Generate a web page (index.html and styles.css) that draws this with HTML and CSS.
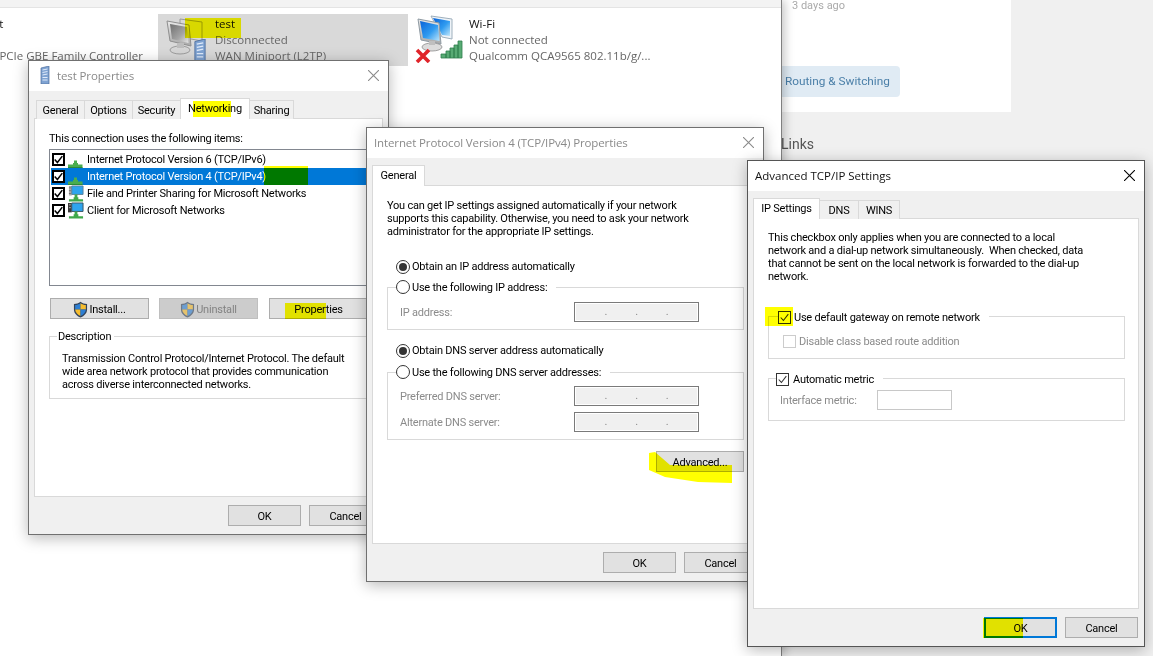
FILE: index.html
```html
<!DOCTYPE html>
<html lang="en">
<head>
<meta charset="utf-8">
<title>Advanced TCP/IP Settings</title>
<link rel="stylesheet" href="styles.css">
</head>
<body>
<svg class="defs" width="0" height="0" aria-hidden="true">
  <defs>
    <linearGradient id="blueScreen" x1="0" y1="0" x2="1" y2="1"><stop offset="0" stop-color="#0a63d8"/><stop offset=".55" stop-color="#2f9bf0"/><stop offset="1" stop-color="#bfe6fb"/></linearGradient>
    <linearGradient id="greyScreen" x1="0" y1="0" x2="1" y2="1"><stop offset="0" stop-color="#6f6f6f"/><stop offset=".6" stop-color="#a5a5a5"/><stop offset="1" stop-color="#e6e6e6"/></linearGradient>
    <linearGradient id="frame" x1="0" y1="0" x2="0" y2="1"><stop offset="0" stop-color="#e8e8e8"/><stop offset="1" stop-color="#a9a9a9"/></linearGradient>
    <symbol id="check" viewBox="0 0 13 13"><path d="M2 6.500 5.200 10 11 2.500" fill="none" stroke="currentColor" stroke-width="1.800"/></symbol>
    <symbol id="thincheck" viewBox="0 0 13 13"><path d="M2 6.500 5.200 10 11 2.500" fill="none" stroke="currentColor" stroke-width="1.200"/></symbol>
    <symbol id="close" viewBox="0 0 10 10"><path d="M0 0 10 10M10 0 0 10" fill="none" stroke="currentColor" stroke-width="1"/></symbol>
    <symbol id="arrow" viewBox="0 0 16 16"><path d="M6 8.500h3v2.500h1v1.500h4.500V16H0v-3.500h5V11h1z" fill="#4aad4f"/><path d="M0 15h14.500v1H0z" fill="#2c8a38"/></symbol>
    <symbol id="share" viewBox="0 0 17 18"><path d="M1 1h3v2h2v6H4v2H1z" fill="#a9a9a9"/><path d="M1 3h2M1 6h2M1 9h2" stroke="#6f6f6f"/><path d="M4 1h12v9H4z" fill="#2ea4ee" stroke="#5b7f99"/><path d="M1 15h5v-2h5v2h5v2.500H1z" fill="#3fa84a"/><path d="M7 10h3v4H7z" fill="#3fa84a"/></symbol>
    <symbol id="client" viewBox="0 0 17 18"><path d="M0 1h4v10H0z" fill="#3a3a3a"/><path d="M1 3h2M1 6h2" stroke="#bdbdbd"/><path d="M4 1h12v9H4z" fill="#2ea4ee" stroke="#39505f"/><path d="M1 15h5v-2h5v2h5v2.500H1z" fill="#3fa84a"/><path d="M7 10h3v4H7z" fill="#3fa84a"/></symbol>
    <symbol id="shield" viewBox="0 0 16 18"><path d="M8 .7C6 2.300 3.500 3 1 3v6c0 4 3 7 7 8.500 4-1.500 7-4.500 7-8.500V3C12.500 3 10 2.300 8 .7z" fill="#33435a"/><path d="M8 2.200C6.300 3.400 4.400 4 2.300 4.200V9H8z" fill="#2d7fd3"/><path d="M8 2.200C9.700 3.400 11.600 4 13.700 4.200V9H8z" fill="#f6bd2f"/><path d="M2.300 9H8v7C5 14.800 2.600 12.400 2.300 9z" fill="#f6bd2f"/><path d="M13.700 9H8v7c3-1.200 5.400-3.600 5.700-7z" fill="#2d7fd3"/></symbol>
    <symbol id="server" viewBox="0 0 10 18"><path d="M1 2 9 0v18H1z" fill="#7fa3d2"/><path d="M2.500 4 7.500 3M2.500 6.500 7.500 5.500M2.500 9 7.500 8M2.500 11.500h5M2.500 14h5" stroke="#dfeafa"/><path d="M1 2 9 0v18H1z" fill="none" stroke="#4d6f9f" stroke-width=".7"/></symbol>
  </defs>
</svg>

<div class="page">
  <main class="netwin">
    <div class="tiles">
      <div class="tile tile-eth">
        <div class="tile-text clip-left">
          <div class="tile-name">Ethernet</div>
          <div class="tile-status">&nbsp;</div>
          <div class="tile-status">Realtek PCIe GBE Family Controller</div>
        </div>
      </div>
      <div class="tile tile-test">
        <svg class="tile-icon" viewBox="0 0 48 48" width="48" height="48">
          <path d="M18 4 40 7v19l-22-4z" fill="#d8d8d8" stroke="#9a9a9a"/>
          <path d="M5 6 27 10l2 21L8 26z" fill="url(#frame)" stroke="#8f8f8f"/>
          <path d="M8 9 25 12l1.500 16L10 24z" fill="url(#greyScreen)"/>
          <ellipse cx="18" cy="35" rx="10" ry="4" fill="#d6d6d6" stroke="#9c9c9c"/>
          <path d="M15 28h7v5h-7z" fill="#bdbdbd"/>
          <use href="#server" x="31" y="24" width="14" height="23"/>
        </svg>
        <div class="tile-text">
          <div class="tile-name">test</div>
          <div class="tile-status">Disconnected</div>
          <div class="tile-status">WAN Miniport (L2TP)</div>
        </div>
      </div>
      <div class="tile tile-wifi">
        <svg class="tile-icon" viewBox="0 0 48 48" width="48" height="48">
          <path d="M16 1 37 4v20l-10-2z" fill="#eef3f8" stroke="#9fb0bd"/>
          <path d="M18 3 35 6v15L27 20z" fill="url(#blueScreen)"/>
          <path d="M3 4 24 8l2 21L6 25z" fill="url(#frame)" stroke="#8e9aa3"/>
          <path d="M5 6 23 10l1.500 16L8 23z" fill="url(#blueScreen)"/>
          <ellipse cx="17" cy="32" rx="10" ry="4" fill="#dcdcdc" stroke="#a0a0a0"/>
          <path d="M14 26h6v4h-6z" fill="#bfbfbf"/>
          <path d="M2 35 14 47M14 35 2 47" stroke="#e0242a" stroke-width="3.600"/>
          <path d="M26 39h5v4h-5zM31 36h4v7h-4zM35 33h4v10h-4zM39 30h4v13h-4zM43 26h4v17h-4z" fill="#58ab74" stroke="#2f7d4c" stroke-width=".8"/>
        </svg>
        <div class="tile-text">
          <div class="tile-name">Wi-Fi</div>
          <div class="tile-status">Not connected</div>
          <div class="tile-status">Qualcomm QCA9565 802.11b/g/...</div>
        </div>
      </div>
    </div>
  </main>
  <aside class="side">
    <div class="side-card">
      <div class="side-time">3 days ago</div>
      <div class="side-chip">Routing &amp; Switching</div>
    </div>
    <div class="side-links">Links</div>
  </aside>
</div>

<section class="win win-props">
  <header class="titlebar inactive">
    <svg class="title-icon" viewBox="0 0 10 18" width="10" height="18"><use href="#server"/></svg>
    <span class="title-text">test Properties</span>
    <svg class="close" width="11" height="11"><use href="#close"/></svg>
  </header>
  <div class="tabs tabs-props">
    <div class="tab tab-first">General</div>
    <div class="tab">Options</div>
    <div class="tab">Security</div>
    <div class="tab active">Networking</div>
    <div class="tab">Sharing</div>
  </div>
  <div class="panel panel-props">
    <p class="line-label">This connection uses the following items:</p>
    <div class="listbox">
      <div class="row"><span class="cb cb-strong"><svg width="11" height="11"><use href="#check"/></svg></span><svg class="row-icon" width="16" height="16"><use href="#arrow"/></svg><span>Internet Protocol Version 6 (TCP/IPv6)</span></div>
      <div class="row selected"><span class="cb cb-strong"><svg width="11" height="11"><use href="#check"/></svg></span><svg class="row-icon" width="16" height="16"><use href="#arrow"/></svg><span>Internet Protocol Version 4 (TCP/IPv4)</span></div>
      <div class="row"><span class="cb cb-strong"><svg width="11" height="11"><use href="#check"/></svg></span><svg class="row-icon" width="16" height="17"><use href="#share"/></svg><span>File and Printer Sharing for Microsoft Networks</span></div>
      <div class="row"><span class="cb cb-strong"><svg width="11" height="11"><use href="#check"/></svg></span><svg class="row-icon" width="16" height="17"><use href="#client"/></svg><span>Client for Microsoft Networks</span></div>
    </div>
    <div class="list-actions">
      <button class="btn btn-wide"><svg class="btn-shield" width="15" height="17"><use href="#shield"/></svg>Install...</button>
      <button class="btn btn-wide btn-disabled"><svg class="btn-shield faded" width="15" height="17"><use href="#shield"/></svg>Uninstall</button>
      <button class="btn btn-wide btn-props">Properties</button>
    </div>
    <fieldset class="group group-desc">
      <legend class="legend-text">Description</legend>
      <p class="para">Transmission Control Protocol/Internet Protocol. The default<br>wide area network protocol that provides communication<br>across diverse interconnected networks.</p>
    </fieldset>
  </div>
  <footer class="footer"><button class="btn">OK</button><button class="btn">Cancel</button></footer>
</section>

<section class="win win-ipv4">
  <header class="titlebar inactive">
    <span class="title-text">Internet Protocol Version 4 (TCP/IPv4) Properties</span>
    <svg class="close" width="11" height="11"><use href="#close"/></svg>
  </header>
  <div class="tabs tabs-ipv4"><div class="tab active">General</div></div>
  <div class="panel panel-ipv4">
    <p class="para">You can get IP settings assigned automatically if your network<br>supports this capability. Otherwise, you need to ask your network<br>administrator for the appropriate IP settings.</p>
    <label class="opt opt-auto opt-auto-ip"><span class="radio on"></span>Obtain an IP address automatically</label>
    <fieldset class="group group-ip">
      <legend class="opt"><span class="radio"></span>Use the following IP address:</legend>
      <div class="field"><span class="field-label">IP address:</span><span class="ipbox"><i>.</i><i>.</i><i>.</i></span></div>
    </fieldset>
    <label class="opt opt-auto opt-auto-dns"><span class="radio on"></span>Obtain DNS server address automatically</label>
    <fieldset class="group group-dns">
      <legend class="opt"><span class="radio"></span>Use the following DNS server addresses:</legend>
      <div class="field"><span class="field-label">Preferred DNS server:</span><span class="ipbox"><i>.</i><i>.</i><i>.</i></span></div>
      <div class="field"><span class="field-label">Alternate DNS server:</span><span class="ipbox"><i>.</i><i>.</i><i>.</i></span></div>
    </fieldset>
    <div class="advanced-row"><button class="btn btn-adv">Advanced...</button></div>
  </div>
  <footer class="footer"><button class="btn">OK</button><button class="btn">Cancel</button></footer>
</section>

<section class="win win-adv">
  <header class="titlebar">
    <span class="title-text">Advanced TCP/IP Settings</span>
    <svg class="close" width="11" height="11"><use href="#close"/></svg>
  </header>
  <div class="tabs tabs-adv">
    <div class="tab active">IP Settings</div>
    <div class="tab">DNS</div>
    <div class="tab">WINS</div>
  </div>
  <div class="panel panel-adv">
    <p class="para">This checkbox only applies when you are connected to a local<br>network and a dial-up network simultaneously.&nbsp; When checked, data<br>that cannot be sent on the local network is forwarded to the dial-up<br>network.</p>
    <fieldset class="group group-gw">
      <legend class="opt"><span class="cb"><svg width="11" height="11"><use href="#thincheck"/></svg></span>Use default gateway on remote network</legend>
      <div class="opt opt-muted"><span class="cb cb-off"></span>Disable class based route addition</div>
    </fieldset>
    <fieldset class="group group-metric">
      <legend class="opt"><span class="cb"><svg width="11" height="11"><use href="#thincheck"/></svg></span>Automatic metric</legend>
      <div class="field"><span class="field-label metric-label">Interface metric:</span><span class="metricbox"></span></div>
    </fieldset>
  </div>
  <footer class="footer"><button class="btn btn-default">OK</button><button class="btn">Cancel</button></footer>
</section>

<div class="mark mark-test"></div>
<div class="mark mark-net"></div>
<div class="mark mark-ipv4"></div>
<div class="mark mark-props"></div>
<svg class="mark mark-adv" width="84" height="32" viewBox="0 0 84 32"><path d="M0 1 6 0 21 13H83V31L49 30 16 25 0 18z" fill="#ffff00"/></svg>
<div class="mark mark-cb"></div>
<div class="mark mark-ok"></div>
</body>
</html>
```

FILE: styles.css
```css
* { box-sizing: border-box; }
html, body { margin: 0; height: 100%; }
body {
  position: relative;
  width: 1153px;
  height: 656px;
  overflow: hidden;
  background: #f0f0f0;
  font-family: "Roboto", "Liberation Sans", sans-serif;
  font-size: 11px;
  letter-spacing: -.22px;
  color: #000;
}
.defs { position: absolute; }
p { margin: 0; }

/* background windows */
.page { display: flex; height: 656px; }
.netwin {
  width: 782px;
  padding-top: 7px;
  background: linear-gradient(#f3f3f3 7px, #fff 7px);
  border-right: 1px solid #808080;
  overflow: hidden;
  position: relative;
  z-index: 1;
  box-shadow: 3px 0 9px rgba(0,0,0,.22);
}
.tiles { display: flex; padding-top: 6px; border-top: 1px solid #e4e4e4; }
.tile { display: flex; height: 52px; flex: none; }
.tile-eth { width: 158px; }
.tile-test { width: 250px; background: #d9d9d9; padding-left: 4px; }
.tile-wifi { width: 300px; padding-left: 7px; }
.tile-icon { flex: none; margin-top: 1px; }
.tile-text { line-height: 16.5px; font-family: "Open Sans", sans-serif; font-size: 11.5px; letter-spacing: 0; padding-top: 1px; white-space: nowrap; margin-left: 6px; }
.tile-test .tile-text { margin-left: 5px; }
.tile-eth .clip-left { margin-left: -43px; }
.tile-name { color: #111; line-height: 18.5px; margin-bottom: -2px; }
.tile-status { color: #666; }
.side { flex: 1; letter-spacing: 0; }
.side-card { width: 229px; height: 112px; background: #fff; overflow: hidden; }
.side-time { padding: 0 0 0 10px; font: 11px/11px "Roboto", sans-serif; color: #aaa; }
.side-chip {
  width: 118px; height: 31px; margin-top: 55px;
  background: #e0ebf4; color: #4a7fa8;
  font: 11.8px/31px "Roboto", sans-serif;
  padding-left: 3px;
  border-radius: 0 4px 4px 0;
}
.side-links { margin-top: 23px; font: 14px/18px "Roboto", sans-serif; color: #555; margin-left: -1px; }

/* dialogs */
.win {
  position: absolute;
  background: #f0f0f0;
  border: 1px solid #707070;
  box-shadow: 0 3px 14px rgba(0,0,0,.28);
  display: flex;
  flex-direction: column;
}
.win-props { left: 28px; top: 60px; width: 361px; height: 475px; z-index: 2; padding: 0 5px; }
.win-ipv4 { left: 366px; top: 127px; width: 398px; height: 455px; z-index: 3; padding: 0 5px; }
.win-adv { left: 747px; top: 160px; width: 398px; height: 487px; z-index: 4; padding: 0 5px; border-color: #555; }

.titlebar {
  display: flex; align-items: center; flex: none;
  height: 30px; margin: 0 -5px; padding: 0 9px 2px 7px;
  background: #fff; font-family: "Open Sans", sans-serif; font-size: 11.5px; letter-spacing: 0; color: #111;
}
.titlebar.inactive { color: #8a8a8a; letter-spacing: -.12px; }
.title-icon { margin: 0 7px 0 4px; }
.title-text { flex: 1; }
.close { color: #000; }
.inactive .close { color: #8a8a8a; }

.tabs { display: grid; height: 21px; margin-top: 7px; margin-bottom: -1px; align-items: end; position: relative; z-index: 1; }
.tabs-props { grid-template-columns: 49px 48px 48px 69px 44px; padding-left: 2px; }
.tabs-ipv4 { grid-template-columns: 53px; }
.tabs-adv { grid-template-columns: 67px 39px 41px; }
.tab {
  height: 19px; border: 1px solid #d9d9d9; border-bottom: 0;
  background: #f0f0f0; text-align: center; line-height: 20px;
  margin-left: -1px; white-space: nowrap;
}
.tab:first-child { margin-left: 0; }
.tab.active { height: 21px; background: #fff; line-height: 20px; position: relative; }
.panel { background: #fff; border: 1px solid #d9d9d9; flex: none; }
.panel-props { height: 379px; padding: 11px 14px 0; }
.panel-ipv4 { height: 359px; padding: 13px 13px 0 14px; }
.panel-adv { height: 391px; padding: 12px 13px 0 14px; }

.para, .line-label { line-height: 13px; white-space: nowrap; }
.line-label { height: 19px; line-height: 18px; }

.listbox { height: 137px; border: 1px solid #828790; padding: 1px 1px 0; overflow: hidden; }
.row { display: flex; align-items: center; height: 17px; padding-left: 1px; white-space: nowrap; }
.row.selected { background: #0078d7; color: #fff; }
.row-icon { margin: 0 3px 0 1px; flex: none; }
.row .cb { margin-right: 2px; }

.cb {
  display: inline-flex; align-items: center; justify-content: center;
  width: 13px; height: 13px; flex: none;
  border: 1px solid #333; background: #fff; color: #333;
  margin-right: 3px;
}
.cb-strong { border: 2px solid #000; width: 13px; height: 13px; color: #000; background: #fff; }
.cb-strong svg { flex: none; }
.cb-off { width: 13px; height: 13px; border-color: #ccc; }

.list-actions { display: flex; gap: 10px; margin-top: 12px; padding-left: 1px; }
.btn {
  width: 73px; height: 21px; padding: 1px 0 0;
  background: #e1e1e1; border: 1px solid #adadad;
  font: inherit; letter-spacing: inherit; color: #000;
  display: inline-flex; align-items: center; justify-content: center;
}
.btn-wide { width: 99px; flex: none; }
.btn-props { margin-left: 1px; }
.btn-shield { margin-right: 1px; }
.btn-disabled { background: #cccccc; border-color: #bfbfbf; color: #838383; }
.faded { opacity: .6; }
.btn-adv { width: 88px; }
.btn-default { border: 2px solid #0078d7; }

.group { margin: 0; min-width: 0; border: 1px solid #d9d9d9; }
.legend-text { margin-left: -5px; padding: 1px 3px 0 1px; line-height: 16px; height: 16px; }
.group-desc { margin-top: 9px; padding: 8px 0 7px 12px; }

.opt { display: flex; align-items: center; height: 16px; white-space: nowrap; }
.opt-auto .radio { position: relative; top: 1px; }
.opt-auto-ip { margin: 20px 0 0 9px; }
.opt-auto-dns { margin: 12px 0 0 9px; }
.group legend.opt { padding: 0 9px 0 0; }
.group-ip { margin-top: 5px; padding: 7px 0 7px 12px; }
.group-ip legend.opt, .group-dns legend.opt { margin-left: -4px; }
.group-dns { margin-top: 6px; padding: 6px 0 7px 12px; }
.group-gw { margin-top: 25px; padding: 9px 0 9px 14px; }
.group-gw legend.opt { margin-left: -5px; position: relative; top: 1px; }
.group-metric { margin-top: 11px; padding: 4px 0 10px 11px; }
.group-metric legend.opt { margin-left: -4px; position: relative; top: 1px; }
.group-metric .cb { margin-right: 4px; }

.radio {
  width: 14px; height: 14px; border: 1px solid #333; border-radius: 50%;
  background: #fff; margin-right: 2px; flex: none;
  display: inline-flex; align-items: center; justify-content: center;
}
.radio.on::after { content: ""; width: 8px; height: 8px; border-radius: 50%; background: #333; }

.field { display: flex; align-items: center; }
.field + .field { margin-top: 6px; }
.field-label { width: 174px; color: #8b8b8b; flex: none; }
.metric-label { width: 97px; }
.ipbox {
  width: 125px; height: 20px; border: 1px solid #7a7a7a; background: #f0f0f0;
  box-shadow: inset 0 0 0 1px #fff;
  display: flex; justify-content: center; gap: 28px; color: #8b8b8b; line-height: 17px;
}
.ipbox i { font-style: normal; }
.metricbox { width: 75px; height: 20px; border: 1px solid #c8c8c8; background: #fff; }
.opt-muted { color: #8b8b8b; }

.advanced-row { display: flex; justify-content: flex-end; margin-top: 11px; }
.footer { display: flex; justify-content: flex-end; gap: 8px; margin-top: 8px; padding-right: 1px; }

/* highlighter strokes */
.mark { position: absolute; z-index: 10; mix-blend-mode: multiply; background: #ffff00; }
svg.mark { background: none; }
.mark-test { left: 185px; top: 18px; width: 56px; height: 20px; }
.mark-net { left: 193px; top: 101px; width: 38px; height: 16px; }
.mark-ipv4 { left: 264px; top: 166px; width: 44px; height: 19px; }
.mark-props { left: 285px; top: 303px; width: 41px; height: 16px; }
.mark-adv { left: 649px; top: 452px; }
.mark-cb { left: 765px; top: 307px; width: 28px; height: 19px; }
.mark-ok { left: 983px; top: 618px; width: 40px; height: 20px; }
```
